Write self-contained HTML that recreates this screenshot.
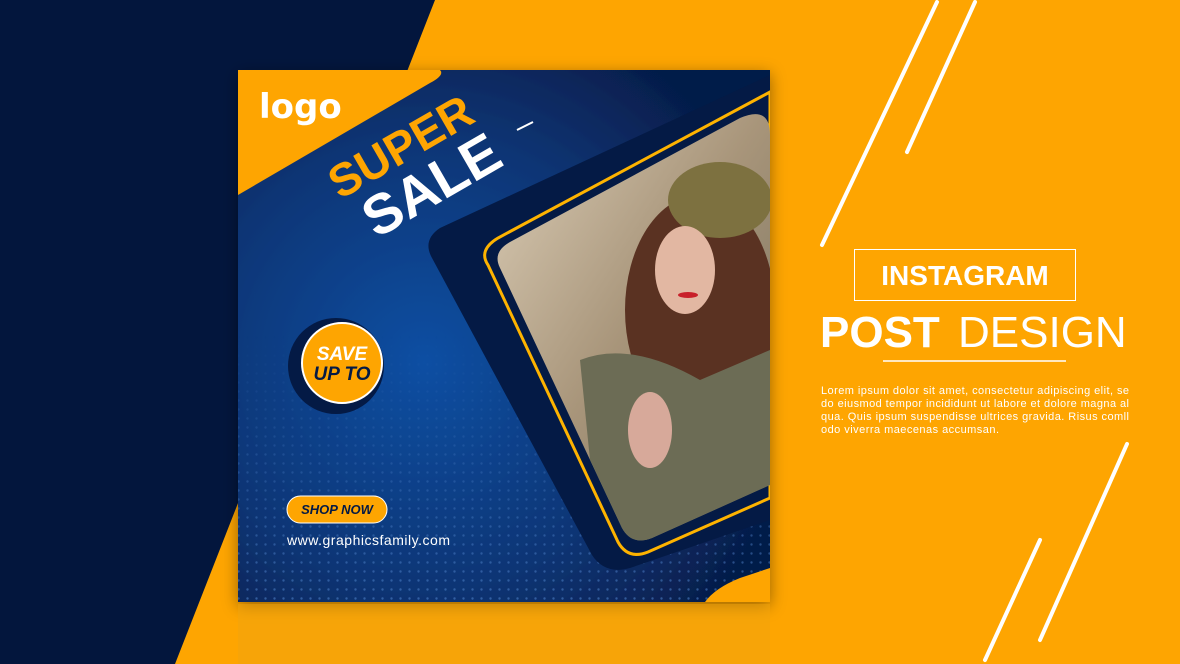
<!DOCTYPE html>
<html><head><meta charset="utf-8"><style>
html,body{margin:0;padding:0;width:1180px;height:664px;overflow:hidden;background:#FEA501;font-family:"Liberation Sans",Arial,sans-serif}
svg{position:absolute;left:0;top:0}
</style></head><body>
<svg width="1180" height="664" viewBox="0 0 1180 664">
<defs>
<radialGradient id="bg" cx="0.35" cy="0.55" r="0.7">
<stop offset="0" stop-color="#0f4fa3"/><stop offset="0.6" stop-color="#0a3575"/><stop offset="1" stop-color="#061d4a"/>
</radialGradient>
<pattern id="dots" width="9" height="9" patternUnits="userSpaceOnUse"><circle cx="4.5" cy="4.5" r="1.2" fill="#4d7fc4" opacity="0.6"/></pattern>
<linearGradient id="fade" x1="0" y1="0" x2="0" y2="1"><stop offset="0.5" stop-color="#fff" stop-opacity="0"/><stop offset="1" stop-color="#fff" stop-opacity="1"/></linearGradient>
<mask id="dm"><rect x="238" y="70" width="532" height="532" fill="url(#fade)"/></mask>
<linearGradient id="photo" x1="0" y1="0" x2="1" y2="1">
<stop offset="0" stop-color="#e2d5bf"/><stop offset="0.5" stop-color="#a8957a"/><stop offset="1" stop-color="#6e6a58"/>
</linearGradient>
<clipPath id="card"><rect x="238" y="70" width="532" height="532"/></clipPath>
<clipPath id="ph"><path d="M500 268 Q492 252 510 242 L740 118 Q770 105 770 135 L770 485 L652 538 Q632 546 622 528 Z"/></clipPath>
<filter id="sh" x="-10%" y="-10%" width="120%" height="120%"><feDropShadow dx="0" dy="4" stdDeviation="8" flood-color="#000" flood-opacity="0.4"/></filter>
</defs>
<polygon points="0,0 435,0 175,664 0,664" fill="#03163d"/>
<rect x="238" y="70" width="532" height="532" fill="url(#bg)" filter="url(#sh)"/>
<g clip-path="url(#card)">
<rect x="238" y="70" width="532" height="532" fill="url(#dots)" mask="url(#dm)"/>
<path d="M238 70 L440 70 Q445 75 430 83 L238 195 Z" fill="#FEA501"/>
<path d="M440 228 Q422 240 432 258 L592 555 Q605 575 630 568 L770 520 L770 75 Z" fill="#041a45"/>
<path d="M488 265 Q478 250 498 238 L770 92 L770 498 L648 552 Q628 560 618 542 Z" fill="none" stroke="#FEB300" stroke-width="3"/>
<g clip-path="url(#ph)">
<rect x="480" y="90" width="300" height="470" fill="url(#photo)"/>
<ellipse cx="700" cy="310" rx="75" ry="115" fill="#5a3222"/>
<ellipse cx="720" cy="200" rx="52" ry="38" fill="#7d7140"/>
<ellipse cx="685" cy="270" rx="30" ry="44" fill="#e2b7a2"/>
<path d="M580 360 Q630 340 700 380 L770 350 L770 560 L600 560 Z" fill="#6c6c55"/>
<ellipse cx="650" cy="430" rx="22" ry="38" fill="#d7a99a"/>
<ellipse cx="688" cy="295" rx="10" ry="3" fill="#c8202a"/>
</g>
<path d="M705 602 Q715 588 740 578 L770 568 L770 602 Z" fill="#FEA501"/>
</g>
<text x="259" y="118" fill="#fff" font-size="34" font-weight="bold" font-family="DejaVu Sans,sans-serif">logo</text>
<g transform="translate(340,200) rotate(-30)">
<text x="0" y="0" fill="#FEA501" font-size="46" font-weight="bold">SUPER</text>
<text x="12" y="52" fill="#fff" font-size="56" font-weight="bold">SALE</text>
</g>
<line x1="517" y1="130" x2="533" y2="122" stroke="#fff" stroke-width="2"/>
<circle cx="336" cy="366" r="48" fill="#041a45"/>
<circle cx="342" cy="363" r="40" fill="#FEA501" stroke="#fff" stroke-width="2"/>
<text x="342" y="360" fill="#fff" font-size="19" font-weight="bold" font-style="italic" text-anchor="middle">SAVE</text>
<text x="342" y="380" fill="#041a45" font-size="19" font-weight="bold" font-style="italic" text-anchor="middle">UP TO</text>
<rect x="287" y="496" width="100" height="27" rx="13.5" fill="#FEA501" stroke="#fff" stroke-width="1"/>
<text x="337" y="514" fill="#041a45" font-size="13" font-weight="bold" font-style="italic" text-anchor="middle">SHOP NOW</text>
<text x="287" y="545" fill="#fff" font-size="14" textLength="163">www.graphicsfamily.com</text>
<g stroke="#fff" stroke-width="4" stroke-linecap="round">
<line x1="937" y1="2" x2="822" y2="245"/>
<line x1="975" y1="2" x2="907" y2="152"/>
<line x1="1127" y1="444" x2="1040" y2="640"/>
<line x1="1040" y1="540" x2="985" y2="660"/>
</g>
<rect x="854.5" y="249.5" width="221" height="51" fill="none" stroke="#fff" stroke-width="1"/>
<text x="965" y="285" fill="#fff" font-size="28" font-weight="bold" text-anchor="middle">INSTAGRAM</text>
<text x="820" y="347" fill="#fff" font-size="44" font-weight="bold">POST</text>
<text x="958" y="347" fill="#fff" font-size="44">DESIGN</text>
<line x1="883" y1="361" x2="1066" y2="361" stroke="#fff" stroke-width="1.5"/>
<g fill="#fff" font-size="11">
<text x="821" y="394" textLength="308">Lorem ipsum dolor sit amet, consectetur adipiscing elit, se</text>
<text x="821" y="407" textLength="308">do eiusmod tempor incididunt ut labore et dolore magna al</text>
<text x="821" y="420" textLength="308">qua. Quis ipsum suspendisse ultrices gravida. Risus comll</text>
<text x="821" y="433" textLength="178">odo viverra maecenas accumsan.</text>
</g>
<rect x="238" y="604" width="532" height="60" fill="#f0a310" opacity="0.5"/>
</svg>
</body></html>
